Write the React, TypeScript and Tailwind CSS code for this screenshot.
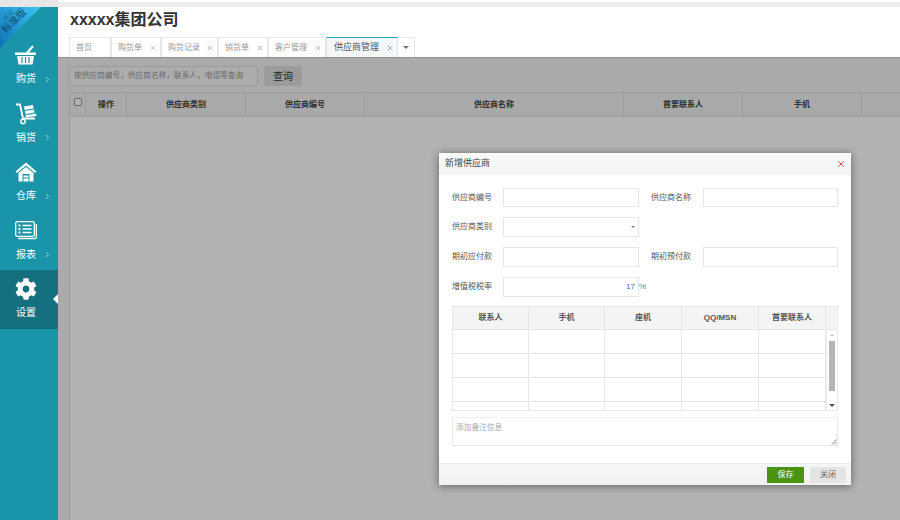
import { ChevronRight, X } from 'lucide-react';
import { FaCog } from 'react-icons/fa';

const font = { fontFamily: '"Liberation Sans", "Noto Sans CJK SC", sans-serif' };

const tabs = [
  { name: '首页', w: 'w-[42px]' },
  { name: '购货单', w: 'w-[50px]', close: true },
  { name: '购货记录', w: 'w-[57px]', close: true },
  { name: '销货单', w: 'w-[50px]', close: true },
  { name: '客户管理', w: 'w-[58px]', close: true },
];

const gridCols = [
  { name: '操作', w: 'w-[41px]' },
  { name: '供应商类别', w: 'w-[119px]' },
  { name: '供应商编号', w: 'w-[119px]' },
  { name: '供应商名称', w: 'w-[259px]' },
  { name: '首要联系人', w: 'w-[119px]' },
  { name: '手机', w: 'w-[119px]' },
];

const contactCols = [
  { name: '联系人', w: 'w-[76px]' },
  { name: '手机', w: 'w-[76px]' },
  { name: '座机', w: 'w-[77px]' },
  { name: 'QQ/MSN', w: 'w-[77px]' },
  { name: '首要联系人', w: 'w-[67px]' },
];

function BasketIcon() {
  return (
    <svg width="22" height="20" viewBox="0 0 22 20" fill="white">
      <path d="M12 8 L18 1" stroke="white" strokeWidth="2" fill="none" />
      <path d="M0 7.5 H21 V10 H0 Z" />
      <path d="M2 11 H19 L17.5 19.5 H3.5 Z" />
      <path d="M7 12 V18 M10.5 12 V18 M14 12 V18" stroke="#1a94a8" strokeWidth="1.2" />
    </svg>
  );
}

function CartIcon() {
  return (
    <svg width="22" height="22" viewBox="0 0 22 22" fill="white">
      <path d="M1 1.5 H5 L8 15.5 H20" stroke="white" strokeWidth="1.8" fill="none" />
      <circle cx="8" cy="18.5" r="2.2" fill="none" stroke="white" strokeWidth="1.5" />
      <path d="M9 3.5 L18 2 L18.5 5.5 L9.5 7 Z" />
      <path d="M10 8 L19 6.5 L19.5 9.5 L10.5 11 Z" />
      <path d="M10.5 12 L21 10.5 L21.5 13 L11 14.5 Z" />
    </svg>
  );
}

function HomeIcon() {
  return (
    <svg width="22" height="20" viewBox="0 0 22 20" fill="white">
      <path d="M11 0.5 L21.5 9.5 L20 11 L11 3.5 L2 11 L0.5 9.5 Z" />
      <path d="M3.5 11 L11 5 L18.5 11 V19.5 H14.5 V12 H7.5 V19.5 H3.5 Z" />
      <path d="M8.5 13.5 H13.5 V15.5 H8.5 Z M8.5 16.5 H13.5 V19.5 H8.5 Z" />
    </svg>
  );
}

function ReportIcon() {
  return (
    <svg width="22" height="19" viewBox="0 0 22 19" fill="none" stroke="white">
      <rect x="0.7" y="0.7" width="18.6" height="14.6" rx="1.5" strokeWidth="1.3" />
      <path d="M21.3 3 V16.5 Q21.3 17.5 20 17.5 H3" strokeWidth="1.3" />
      <path d="M3.5 4.5 H5.5 M3.5 8 H5.5 M3.5 11.5 H5.5" strokeWidth="2" />
      <path d="M7.5 4.5 H16.5 M7.5 8 H16.5 M7.5 11.5 H16.5" strokeWidth="1.3" />
    </svg>
  );
}

function NavItem({ label, icon, active, arrow }: { label: string; icon: React.ReactNode; active?: boolean; arrow?: boolean }) {
  return (
    <div className={`relative h-[58.5px] pl-[15px] flex flex-col items-start justify-center gap-[6px] ${active ? 'bg-[#14707e]' : ''}`}>
      <div className="h-[22px] flex items-center">{icon}</div>
      <div className="flex items-center gap-[7px] pl-[1px] text-[10px] leading-[14px] text-white">
        <span>{label}</span>
        {arrow && <ChevronRight size={9} className="text-[#cfe8ec]" />}
      </div>
      {active && (
        <span className="absolute right-0 top-[24px] border-y-[5px] border-r-[5px] border-y-transparent border-r-white" />
      )}
    </div>
  );
}

function Field({ label, children }: { label: string; children?: React.ReactNode }) {
  return (
    <div className="flex items-center w-[187px] h-full">
      <span className="w-[51px] text-[8px] text-[#555]">{label}</span>
      {children}
    </div>
  );
}

const inputCls = 'w-[136px] h-full bg-white border border-[#e3e8ea]';

export default function App() {
  return (
    <div className="relative w-[900px] h-[520px] flex flex-col overflow-hidden bg-white" style={font}>
      <div className="h-[7px] shrink-0 flex">
        <div className="w-[58px] bg-[#e6e6e6]" />
        <div className="flex-1 flex flex-col">
          <div className="h-[2px] bg-white" />
          <div className="h-[5px] bg-[#ececec]" />
        </div>
      </div>

      <div className="flex-1 flex min-h-0">
        {/* Seitenleiste */}
        <aside className="relative w-[58px] shrink-0 bg-[#1a94a8] pt-[29px] overflow-hidden">
          <NavItem label="购货" icon={<BasketIcon />} arrow />
          <NavItem label="销货" icon={<CartIcon />} arrow />
          <NavItem label="仓库" icon={<HomeIcon />} arrow />
          <NavItem label="报表" icon={<ReportIcon />} arrow />
          <NavItem label="设置" icon={<FaCog size={22} color="white" />} active />
          <div className="absolute left-0 top-0 w-[41px] h-[41px] bg-gradient-to-bl from-[#3cc8f0] to-[#0f6fb5] [clip-path:polygon(0_0,100%_0,0_100%)]" />
          <div className="absolute left-[-6px] top-[4px] w-[36px] -rotate-45 text-center leading-none">
            <div className="text-[6px] text-[#1d6a90]">体验</div>
            <div className="text-[10px] text-[#0e4a6b]">标准版</div>
          </div>
        </aside>

        <main className="relative flex-1 flex flex-col min-w-0">
          <header className="h-[50px] shrink-0 bg-white pl-[12px] flex flex-col">
            <h1 className="text-[16px] leading-[24px] mt-[1px] font-bold text-[#333]">xxxxx集团公司</h1>
            <div className="mt-auto -ml-[1px] h-[20px] flex">
              {tabs.map((t) => (
                <div
                  key={t.name}
                  className={`${t.w} flex items-center justify-between pl-[6px] pr-[3px] border border-b-0 border-[#e8e8e8] text-[8px] text-[#999]`}
                >
                  <span>{t.name}</span>
                  {t.close && <X size={8} className="text-[#aaa]" />}
                </div>
              ))}
              <div className="w-[72px] flex items-center justify-between pl-[7px] pr-[3px] bg-[#f4f7f8] border-t border-t-[#20a5b8] border-x border-x-[#e0e0e0] text-[9px] text-[#555]">
                <span>供应商管理</span>
                <X size={8} className="text-[#888]" />
              </div>
              <div className="w-[17px] flex items-center justify-center border border-b-0 border-l-0 border-[#e8e8e8] rounded-tr-[2px]">
                <span className="border-x-[3px] border-t-[3px] border-x-transparent border-t-[#777]" />
              </div>
            </div>
          </header>

          <div className="relative flex-1 min-h-0 flex flex-col bg-[#f4f4f4] border-t border-[#cfcfcf] pt-[8px] pl-[11px] overflow-hidden">
            <div className="flex gap-[6px] h-[20px] shrink-0">
              <div className="w-[189px] flex items-center px-[4px] bg-[#f7f7f7] border border-[#e0e0e0] rounded-[2px] text-[7.7px] text-[#999]">
                按供应商编号，供应商名称，联系人，电话等查询
              </div>
              <button type="button" className="w-[38px] bg-[#dedede] rounded-[2px] text-[10px] text-[#333]">
                查询
              </button>
            </div>
            <div className="mt-[6px] flex-1 w-[900px] bg-white border-l border-[#dce2e4]">
              <div className="flex h-[25px] bg-[#f3f3f3] border-y border-[#dce2e4]">
                <div className="w-[16px] flex justify-center pt-[5px] border-r border-[#dce2e4]">
                  <span className="w-[8px] h-[8px] rounded-[2px] bg-white border border-[#999]" />
                </div>
                {gridCols.map((c) => (
                  <div
                    key={c.name}
                    className={`${c.w} flex items-center justify-center border-r border-[#dce2e4] text-[8px] font-bold text-[#444]`}
                  >
                    {c.name}
                  </div>
                ))}
              </div>
            </div>
          </div>

          {/* Abdunklung */}
          <div className="absolute left-0 right-0 top-[50px] bottom-0 bg-black/30" />
        </main>
      </div>

      {/* Dialog */}
      <div className="absolute left-[439px] top-[153px] w-[412px] h-[332px] bg-white flex flex-col shadow-[0_1px_8px_rgba(0,0,0,0.45)]">
        <div className="h-[22px] shrink-0 flex items-center justify-between pl-[6px] pr-[5px] bg-gradient-to-b from-[#fafafa] to-[#f2f2f2]">
          <span className="text-[9px] text-[#444]">新增供应商</span>
          <X size={10} className="text-[#c0392b]" />
        </div>

        <div className="pl-[13px] pt-[13px] flex flex-col gap-[10px]">
          <div className="h-[19px] flex gap-[12px]">
            <Field label="供应商编号">
              <div className={inputCls} />
            </Field>
            <Field label="供应商名称">
              <div className="ml-[1px] w-[135px] h-full bg-white border border-[#e8e8e8]" />
            </Field>
          </div>
          <div className="h-[20px] flex">
            <Field label="供应商类别">
              <div className={`${inputCls} flex items-center justify-end pr-[3px]`}>
                <span className="border-x-[2px] border-t-[2px] border-x-transparent border-t-[#777]" />
              </div>
            </Field>
          </div>
          <div className="h-[20px] flex gap-[12px]">
            <Field label="期初应付款">
              <div className={inputCls} />
            </Field>
            <Field label="期初预付款">
              <div className="ml-[1px] w-[135px] h-full bg-white border border-[#e3e8ea]" />
            </Field>
          </div>
          <div className="h-[20px] flex items-center">
            <span className="w-[51px] text-[8px] text-[#555]">增值税税率</span>
            <div className={`${inputCls} flex items-center justify-end pr-[3px] text-[8px] text-[#3b6f9c]`}>17</div>
            <span className="text-[8px] text-[#777]">%</span>
          </div>
        </div>

        <div className="ml-[13px] mt-[9px] w-[386px] h-[105px] flex border border-[#e6e8ea] overflow-hidden shrink-0">
          <div className="w-[373px] shrink-0">
            <div className="flex h-[23px] bg-[#f4f4f4] border-b border-[#e6e8ea]">
              {contactCols.map((c) => (
                <div
                  key={c.name}
                  className={`${c.w} flex items-center justify-center border-r border-[#e6e8ea] text-[8px] font-bold text-[#555]`}
                >
                  {c.name}
                </div>
              ))}
            </div>
            {[0, 1, 2, 3].map((r) => (
              <div key={r} className="flex h-[24px] border-b border-[#e2e5e8]">
                {contactCols.map((c) => (
                  <div key={c.name} className={`${c.w} border-r border-[#e6e8ea]`} />
                ))}
              </div>
            ))}
          </div>
          <div className="flex-1 flex flex-col bg-[#f4f4f4]">
            <div className="h-[23px] border-b border-[#e6e8ea]" />
            <div className="flex-1 flex flex-col items-center bg-white border-l border-[#eee] px-[2px]">
              <span className="mt-[4px] border-x-[2px] border-b-[2px] border-x-transparent border-b-[#bbb]" />
              <div className="mt-[5px] w-full h-[50px] bg-[#b5b5b5]" />
              <span className="mt-auto mb-[3px] border-x-[3px] border-t-[3px] border-x-transparent border-t-[#555]" />
            </div>
          </div>
        </div>

        <div className="relative ml-[13px] mt-[6px] w-[386px] h-[29px] bg-white border border-[#e6e8ea] border-t-[#f2f2f2] px-[3px] pt-[4px] text-[7.7px] text-[#aaa] shrink-0">
          添加备注信息
          <svg className="absolute right-0 bottom-0" width="6" height="6" viewBox="0 0 6 6" stroke="#777" strokeWidth="0.7">
            <path d="M0.5 5.5 L5.5 0.5 M3 5.5 L5.5 3" />
          </svg>
        </div>

        <div className="mt-auto h-[22px] flex items-center justify-end gap-[6px] pr-[5px] bg-gradient-to-b from-[#f7f7f7] to-[#f1f1f1] border-t border-[#ebebeb]">
          <button type="button" className="w-[37px] h-[16px] bg-[#4a9414] text-[8px] text-white">
            保存
          </button>
          <button type="button" className="w-[36px] h-[16px] bg-[#e2e4e5] text-[8px] text-[#666]">
            关闭
          </button>
        </div>
      </div>
    </div>
  );
}
